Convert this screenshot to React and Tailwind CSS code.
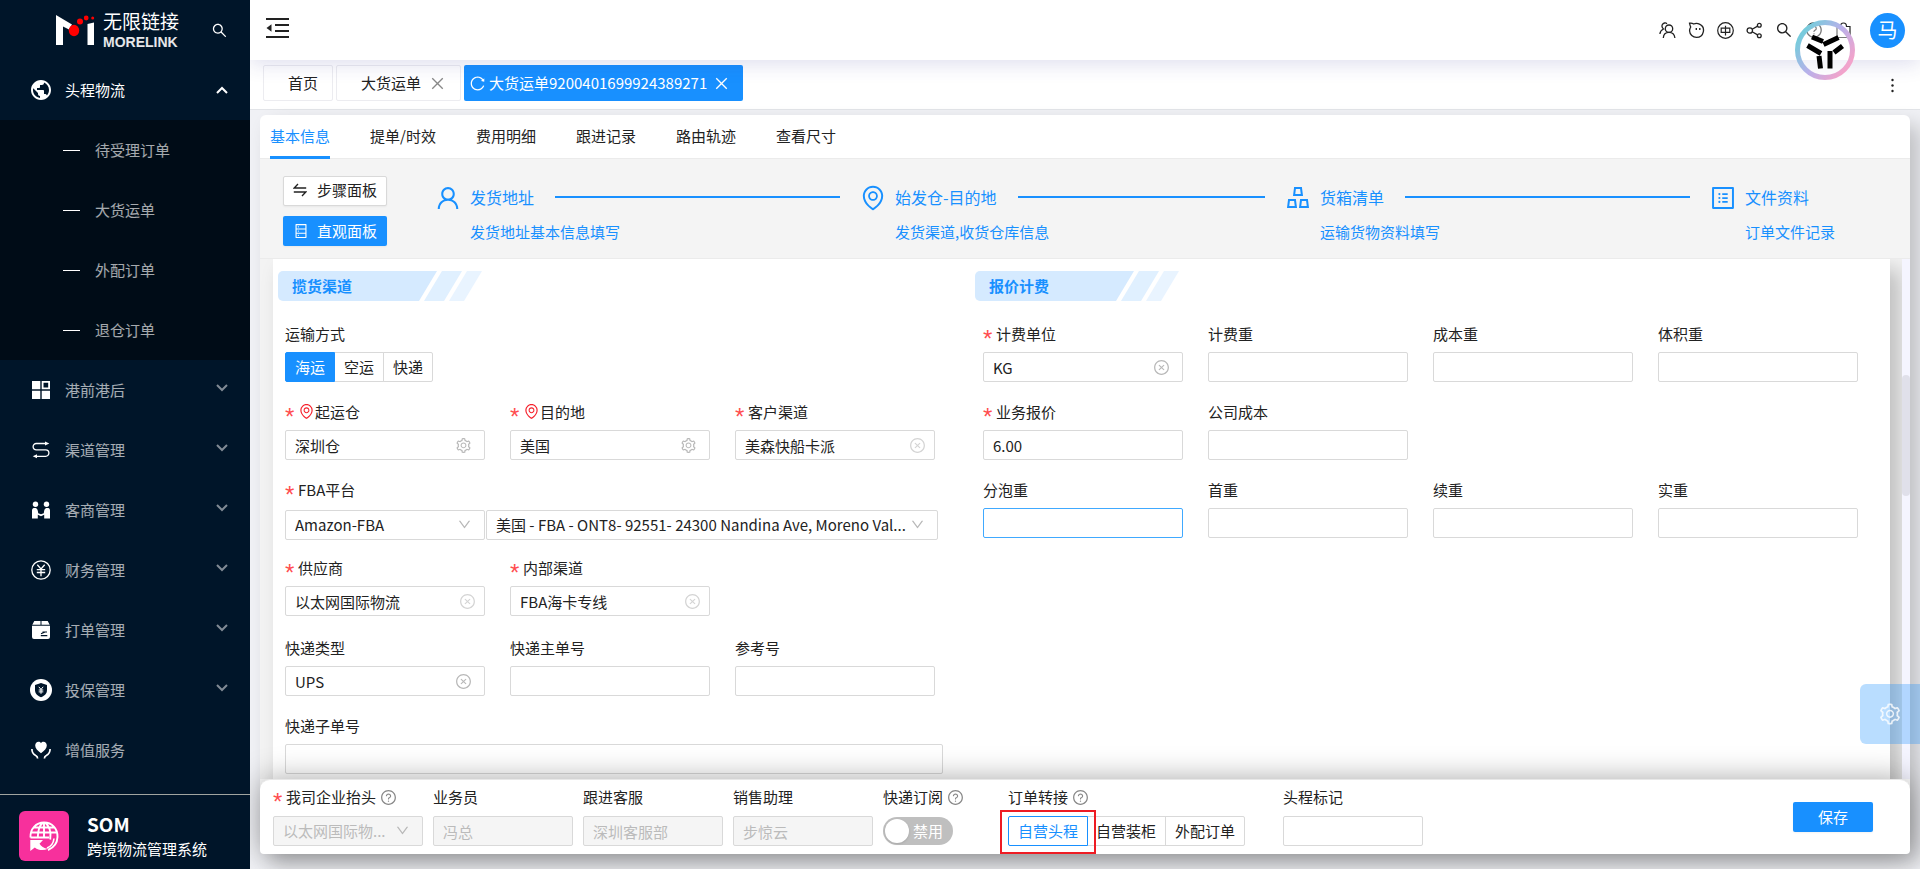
import {
  AiOutlineClose,
  AiOutlineCloseCircle,
  AiOutlineDatabase,
  AiOutlineDown,
  AiOutlineEnvironment,
  AiOutlineProfile,
  AiOutlineQuestionCircle,
  AiOutlineReload,
  AiOutlineSearch,
  AiOutlineSetting,
  AiOutlineUser,
} from "react-icons/ai";
import { MdPublic } from "react-icons/md";

/* ---------- icons ---------- */

function MoreLinkMark() {
  return (
    <svg width="40" height="32" viewBox="0 0 40 32" aria-hidden="true">
      <path d="M1 1L17 10.500 14 15.500 8 12.500V31H1z" fill="#fff" />
      <path d="M32.500 10L39 8.500V31H32.500z" fill="#fff" />
      <ellipse cx="19" cy="16.500" rx="5.200" ry="5.800" fill="#f00" />
      <circle cx="25" cy="7.500" r="3" fill="#f00" />
      <circle cx="31.200" cy="4" r="2.400" fill="#f00" />
      <circle cx="37.700" cy="4" r="1.500" fill="#f00" />
    </svg>
  );
}

function GridIcon() {
  return (
    <svg width="18" height="18" viewBox="0 0 18 18" fill="currentColor">
      <path d="M0 0h8.300v8.300H0zM0 9.700h8.300V18H0zM9.700 9.700H18V18H9.700z" />
      <path d="M10.600 .9h6.500v6.500h-6.500z" fill="none" stroke="currentColor" strokeWidth="1.800" />
    </svg>
  );
}

function RouteIcon() {
  return (
    <svg width="18" height="18" viewBox="0 0 18 18" fill="none" stroke="currentColor" strokeWidth="1.300">
      <path d="M14 2.500H4.300a3.200 3.200 0 0 0 0 6.400h9.400a3.200 3.200 0 0 1 0 6.400H4" />
      <path d="M13 .5l4.300 2-4.300 2zM5 13.300L.7 15.300 5 17.300z" fill="currentColor" stroke="none" />
    </svg>
  );
}

function PartnersIcon() {
  return (
    <svg width="18" height="18" viewBox="0 0 18 18" fill="currentColor">
      <circle cx="3.500" cy="3.200" r="2.700" />
      <circle cx="14.500" cy="3.200" r="2.700" />
      <path d="M0 17.500V9.500C0 7.800 1 7 2.600 7 4.500 7 5.600 8 5.900 10.200l.3 2 2.800 1 2.800-1 .3-2C12.400 8 13.500 7 15.400 7 17 7 18 7.800 18 9.500v8h-5.800v-3.700L9 15.200l-3.200-1.400v3.700z" />
    </svg>
  );
}

function YuanIcon() {
  return (
    <svg width="20" height="20" viewBox="0 0 20 20" fill="none" stroke="currentColor" strokeWidth="1.300">
      <circle cx="10" cy="10" r="9.200" />
      <path d="M6.300 4.800L10 9l3.700-4.200M10 9v7.300M5.800 9.600h8.400M5.800 12.500h8.400" />
    </svg>
  );
}

function BoxIcon() {
  return (
    <svg width="18" height="18" viewBox="0 0 18 18">
      <path d="M2.300 0h6.200v3.800H.3zM9.500 0h6.200l2 3.800H9.500zM0 4.800h18V16a2 2 0 0 1-2 2H2a2 2 0 0 1-2-2z" fill="currentColor" />
      <path d="M10.500 11h4.500M8.800 14.600h6.500M13 11l-4 1.700" stroke="#001529" strokeWidth="1.200" />
    </svg>
  );
}

function InsuranceIcon() {
  return (
    <svg width="22" height="22" viewBox="0 0 22 22">
      <circle cx="11" cy="11" r="11" fill="currentColor" />
      <path d="M11 4l6 2v5c0 3.600-2.500 5.800-6 7.300C7.500 16.800 5 14.600 5 11V6z" fill="#001529" />
      <path d="M8.800 7.800L11 10.400l2.200-2.600M11 10.400v4.400M8.700 11h4.600M8.700 12.900h4.600" stroke="#fff" strokeWidth="1" fill="none" />
    </svg>
  );
}

function CareIcon() {
  return (
    <svg width="20" height="18" viewBox="0 0 20 18">
      <path d="M10 12.300C6.500 9.500 4.200 7.500 4.200 4.500 4.200 2.200 5.800.8 7.500.8c1 0 2 .5 2.500 1.400.5-.9 1.500-1.400 2.500-1.400 1.700 0 3.300 1.400 3.300 3.700 0 3-2.300 5-5.800 7.800z" fill="currentColor" />
      <path d="M.9 8c0 3.800 1.200 5.200 3.800 6.500 1.500.7 1.900 1.500 1.900 3M19.100 8c0 3.800-1.200 5.200-3.800 6.500-1.500.7-1.900 1.500-1.900 3" fill="none" stroke="currentColor" strokeWidth="1.700" />
    </svg>
  );
}

function SomIcon() {
  return (
    <svg width="32" height="32" viewBox="0 0 32 32" fill="none" stroke="#fff" strokeWidth="1.900">
      <path d="M2.500 17.500C2 9 8 2.500 16 2.500S29.800 8.500 29.500 17c-.2 6-3.500 10.500-9.500 13M3 12.500h26M6 7.500h20M2.500 17.500H21M16 2.500v15M15 2.500C11 6 9.800 11 9.800 17.500M17 2.500c5 4 6.200 10 5.200 17" />
      <path d="M26 18.500c-.5 4.500-3 8-7 9.500" strokeWidth="1.600" />
      <path d="M2.300 20H15l-3.500 3.700c1.500 2.600 4.300 4.600 8.500 5-4.500 2.300-9.500 1.700-13.200-1.300L2.300 31z" fill="#fff" stroke="none" />
    </svg>
  );
}

function MenuFoldIcon() {
  return (
    <svg width="23" height="22" viewBox="0 0 23 22" fill="none" stroke="#222" strokeWidth="2">
      <path d="M0 2h23M9 8h14M9 14h14M0 20h23" />
      <path d="M5.500 7.300v7.400L.5 11z" fill="#222" stroke="none" />
    </svg>
  );
}

function PeopleIcon() {
  return (
    <svg width="17" height="17" viewBox="0 0 17 17" fill="none" stroke="currentColor" strokeWidth="1.300">
      <circle cx="10" cy="6.700" r="3.700" />
      <path d="M4.300 16c.2-3.500 2-5.600 5.700-5.600s5.500 2.100 5.900 5.600M7.900 1.800C7.300 1 6.500.8 5.500 1 3.500 1.400 2.600 3.300 3.200 5.200c.2.800.8 1.400 1.300 1.800C2.300 8 1.100 9.500.9 12" />
    </svg>
  );
}

function KittyIcon() {
  return (
    <svg width="17" height="17" viewBox="0 0 17 17" fill="none" stroke="currentColor" strokeWidth="1.300">
      <path d="M1.500 1.200c1.400-.3 3 0 4.200.8 1.700-.7 4-.7 5.800.2 3 1.400 4.500 4.500 3.800 7.700-.7 3.400-3.500 5.500-6.800 5.500-3.700 0-6.700-2.800-6.900-6.400C1.500 7.500 2 6.200 2.700 5c-.6-1.200-.9-2.600-1.200-3.800z" />
      <path d="M8.300 6v2M11.800 6v2" strokeWidth="1.400" />
    </svg>
  );
}

function LangIcon() {
  return (
    <svg width="17" height="17" viewBox="0 0 17 17" fill="none" stroke="currentColor" strokeWidth="1.200">
      <circle cx="8.500" cy="8.500" r="7.800" />
      <path d="M4.200 6.200h8.600v4.200H4.200zM8.500 3.800v9.600" />
    </svg>
  );
}

function ShareIcon() {
  return (
    <svg width="17" height="17" viewBox="0 0 17 17" fill="none" stroke="currentColor" strokeWidth="1.300">
      <circle cx="3.800" cy="8.500" r="2.700" />
      <circle cx="13.300" cy="3.200" r="1.900" />
      <circle cx="13.300" cy="13.800" r="1.900" />
      <path d="M6.200 7.200l5.400-3.100M6.200 9.800l5.400 3.100" />
    </svg>
  );
}

function BagIcon() {
  return (
    <svg width="17" height="17" viewBox="0 0 17 17" fill="none" stroke="currentColor" strokeWidth="1.200">
      <path d="M2 4.500h3.500C5.500 2 6.500 1 8.500 1s3 1 3 3.500H15v11H2z" />
    </svg>
  );
}

function FloatLogo() {
  return (
    <svg width="60" height="60" viewBox="0 0 60 60">
      <defs>
        <linearGradient id="ring" x1="0.100" y1="0.200" x2="0.900" y2="0.800">
          <stop offset="0" stopColor="#78cbdc" />
          <stop offset="0.500" stopColor="#b9b0ea" />
          <stop offset="1" stopColor="#f2a3cb" />
        </linearGradient>
      </defs>
      <circle cx="30" cy="30" r="27.500" fill="#fff" fillOpacity="0.4" stroke="url(#ring)" strokeWidth="5" />
      <path d="M17 17l11 4.500M28.500 24.500L43.500 17.500M12.500 25.500L26 33.500M39 32.500l8.500-6.500M24 36l1.500 12.500M35 31v17.500" stroke="#000" strokeWidth="5" />
    </svg>
  );
}

function SwapIcon() {
  return (
    <svg width="14" height="14" viewBox="0 0 14 14" fill="none" stroke="currentColor" strokeWidth="1.300">
      <path d="M5 1L1.200 5h12M.8 9h12L9 13" />
    </svg>
  );
}

function CratesIcon() {
  return (
    <svg width="22" height="22" viewBox="0 0 22 22" fill="none" stroke="currentColor" strokeWidth="2">
      <path d="M8 1h6l.9 7H7.100zM2 13h6l.9 7H1.100zM14 13h6l.9 7h-7.800z" />
    </svg>
  );
}

/* ---------- sidebar ---------- */

const subMenu = ["待受理订单", "大货运单", "外配订单", "退仓订单"];

const menu = [
  { name: "港前港后", icon: <GridIcon />, arrow: true },
  { name: "渠道管理", icon: <RouteIcon />, arrow: true },
  { name: "客商管理", icon: <PartnersIcon />, arrow: true },
  { name: "财务管理", icon: <YuanIcon />, arrow: true },
  { name: "打单管理", icon: <BoxIcon />, arrow: true },
  { name: "投保管理", icon: <InsuranceIcon />, arrow: true },
  { name: "增值服务", icon: <CareIcon />, arrow: false },
];

function Chevron({ up }) {
  return (
    <svg
      width="12"
      height="8"
      viewBox="0 0 12 8"
      fill="none"
      stroke="currentColor"
      strokeWidth="2"
      className={up ? "text-white" : "mb-1 text-white/50"}
    >
      <path d={up ? "M1 7l5-5 5 5" : "M1 1l5 5 5-5"} />
    </svg>
  );
}

function Sidebar() {
  return (
    <aside className="relative z-20 flex w-[250px] shrink-0 flex-col bg-[#001529] text-white/65">
      <div className="flex h-[60px] shrink-0 items-center pl-[55px] pr-[22px] text-white">
        <MoreLinkMark />
        <div className="ml-2 flex flex-col">
          <span className="h-5 text-[19px] leading-[20px]">无限链接</span>
          <span className="mt-1 font-['Liberation_Sans',sans-serif] text-[14px] font-bold leading-none text-white/90">
            MORELINK
          </span>
        </div>
        <button className="ml-auto" aria-label="搜索">
          <AiOutlineSearch size={17} />
        </button>
      </div>

      <nav className="min-h-0 flex-1 overflow-hidden">
        <a href="#" className="flex h-[60px] items-center pl-[30px] pr-[22px] text-white">
          <span className="flex w-[22px] justify-center">
            <MdPublic size={24} className="shrink-0" />
          </span>
          <span className="ml-[13px] flex-1">头程物流</span>
          <Chevron up />
        </a>
        <div className="bg-[#000c17]">
          {subMenu.map((name) => (
            <a key={name} href="#" className="flex h-[60px] items-center pl-[63px]">
              <span className="h-px w-[17px] bg-white" />
              <span className="ml-[15px]">{name}</span>
            </a>
          ))}
        </div>
        {menu.map((item) => (
          <a key={item.name} href="#" className="flex h-[60px] items-center pl-[30px] pr-[22px]">
            <span className="flex w-[22px] justify-center text-white">{item.icon}</span>
            <span className="ml-[13px] flex-1">{item.name}</span>
            {item.arrow && <Chevron />}
          </a>
        ))}
      </nav>

      <div className="flex h-[75px] shrink-0 items-center border-t border-[#a0a4a0] pl-[19px] pt-2 text-white">
        <div className="flex h-[50px] w-[50px] items-center justify-center rounded-md bg-[#f7309c]">
          <SomIcon />
        </div>
        <div className="ml-[18px]">
          <div className="text-[19px] font-bold leading-[26px]">SOM</div>
          <div className="leading-[24px]">跨境物流管理系统</div>
        </div>
      </div>
    </aside>
  );
}

/* ---------- top ---------- */

function Header() {
  return (
    <header className="relative z-10 flex h-[60px] shrink-0 items-center bg-white pl-4 pr-[15px] shadow-[0_4px_20px_rgba(50,50,150,0.16)]">
      <button aria-label="收起菜单" className="-mt-1">
        <MenuFoldIcon />
      </button>
      <div className="ml-auto flex items-center gap-3 text-[#222]">
        <PeopleIcon />
        <KittyIcon />
        <LangIcon />
        <ShareIcon />
        <AiOutlineSearch size={18} />
        <AiOutlineQuestionCircle size={18} />
        <BagIcon />
      </div>
      <span className="ml-[18px] flex h-[35px] w-[35px] items-center justify-center rounded-full bg-[#1890ff] text-[20px] text-white">
        马
      </span>
      <div className="absolute right-[65px] top-5">
        <FloatLogo />
      </div>
    </header>
  );
}

function PageTabs() {
  return (
    <div className="flex h-[50px] shrink-0 items-center gap-[3px] border-b border-[#e2e4e8] bg-white pb-1 pl-[13px] pr-[26px] pt-px">
      <a href="#" className="flex h-9 items-center rounded-xs border border-[#ececf0] pl-6 pr-[14px]">
        首页
      </a>
      <a href="#" className="flex h-9 items-center rounded-xs border border-[#ececf0] pl-6 pr-[14px]">
        大货运单
        <AiOutlineClose size={17} className="ml-2 text-[#888]" />
      </a>
      <a href="#" className="flex h-9 items-center rounded-xs bg-[#1890ff] pl-[5px] pr-[13px] text-white">
        <AiOutlineReload size={17} className="mr-[3px]" />
        大货运单9200401699924389271
        <AiOutlineClose size={17} className="ml-1.5" />
      </a>
      <button aria-label="更多" className="ml-auto mt-1">
        <svg width="3" height="15" viewBox="0 0 3 15" fill="#222">
          <circle cx="1.500" cy="2" r="1.200" />
          <circle cx="1.500" cy="7.500" r="1.200" />
          <circle cx="1.500" cy="13" r="1.200" />
        </svg>
      </button>
    </div>
  );
}

const detailTabs = ["基本信息", "提单/时效", "费用明细", "跟进记录", "路由轨迹", "查看尺寸"];

function DetailTabs() {
  return (
    <div className="flex h-11 shrink-0 gap-10 border-b border-[#ebebeb] px-[10px]">
      {detailTabs.map((name, i) => (
        <button
          key={name}
          className={
            i === 0
              ? "-mb-px border-b-[3px] border-[#1890ff] pt-px text-[#1890ff]"
              : "-mb-px border-b-[3px] border-transparent pt-px"
          }
        >
          {name}
        </button>
      ))}
    </div>
  );
}

const steps = [
  { title: "发货地址", desc: "发货地址基本信息填写", icon: <AiOutlineUser size={28} /> },
  { title: "始发仓-目的地", desc: "发货渠道,收货仓库信息", icon: <AiOutlineEnvironment size={28} /> },
  { title: "货箱清单", desc: "运输货物资料填写", icon: <CratesIcon /> },
  { title: "文件资料", desc: "订单文件记录", icon: <AiOutlineProfile size={28} /> },
];

function StepsBar() {
  return (
    <div className="flex h-[100px] shrink-0 border-b border-[#ebebeb] bg-[#f4f4f4] pl-[23px] pr-[75px]">
      <div className="flex flex-col gap-[10px] pt-[17px]">
        <button className="flex h-[30px] items-center gap-[10px] rounded-xs border border-[#d9d9d9] bg-white px-[9px] pb-0.5 shadow-xs">
          <SwapIcon />
          步骤面板
        </button>
        <button className="flex h-[30px] items-center gap-2 rounded-xs bg-[#1890ff] px-[10px] text-white shadow-xs">
          <AiOutlineDatabase size={16} />
          直观面板
        </button>
      </div>
      <div className="ml-[51px] flex flex-1 pt-[25px] text-[#1890ff]">
        {steps.map((step, i) => (
          <div key={step.title} className={i < 3 ? "flex min-w-0 flex-1" : "flex"}>
            <div className="flex h-[28px] w-8 shrink-0 items-center">
              <span className="-ml-1 flex w-[28px] justify-center">{step.icon}</span>
            </div>
            <div className="flex-1">
              <div className="flex h-[26px] items-center text-[16px]">
                <span>{step.title}</span>
                {i < 3 && <span className="ml-[21px] mr-[23px] h-0.5 flex-1 bg-[#1890ff]" />}
              </div>
              <div className="mt-[10px] leading-[24px]">{step.desc}</div>
            </div>
          </div>
        ))}
      </div>
    </div>
  );
}

/* ---------- form ---------- */

function SectionTitle({ children }) {
  return (
    <div className="relative mb-[21px] flex h-[30px] w-[204px] items-center">
      <svg width="204" height="30" viewBox="0 0 204 30" className="absolute inset-0" aria-hidden="true">
        <path d="M5 0H159L141 30H5a5 5 0 0 1-5-5V5a5 5 0 0 1 5-5z" fill="#d5eaff" />
        <path d="M164 0h20l-18 30h-20z" fill="#e0f0ff" />
        <path d="M189 0h15l-18 30h-15z" fill="#e9f4ff" />
      </svg>
      <h2 className="relative pl-[14px] font-bold text-[#1890ff]">{children}</h2>
    </div>
  );
}

function Label({ id, required, pin, help, children }) {
  return (
    <label htmlFor={id} className="flex h-6 items-center whitespace-nowrap">
      {required && (
        <span className="w-[13px] pt-2.5 font-['Liberation_Sans',sans-serif] text-[24px] leading-none text-[#ff4d4f]">
          *
        </span>
      )}
      {pin && <AiOutlineEnvironment size={17} className="mb-0.5 text-[#f5222d]" />}
      {children}
      {help && <AiOutlineQuestionCircle size={17} className="ml-1 text-[#888]" />}
    </label>
  );
}

const suffixes = {
  gear: <AiOutlineSetting size={17} />,
  clear: <AiOutlineCloseCircle size={17} />,
};

function Field({ id, label, required, pin, value = "", suffix, soft, focus, wide }) {
  return (
    <div className={wide ? "w-[658px]" : "w-[200px]"}>
      <Label id={id} required={required} pin={pin}>
        {label}
      </Label>
      <div className="relative mt-1.5">
        <input
          id={id}
          defaultValue={value}
          className={
            focus
              ? "block h-[30px] w-full rounded-xs border border-[#40a9ff] bg-white px-[9px] outline-none"
              : "block h-[30px] w-full rounded-xs border border-[#d9d9d9] bg-white px-[9px] outline-none"
          }
        />
        {suffix && (
          <span
            className={
              soft
                ? "absolute inset-y-0 right-[9px] flex items-center text-[#d4d4d4]"
                : "absolute inset-y-0 right-[13px] flex items-center text-[#b8b8b8]"
            }
          >
            {suffixes[suffix]}
          </span>
        )}
      </div>
    </div>
  );
}

function Select({ id, name, text, disabled, className }) {
  return (
    <div className={`relative ${className}`}>
      <select
        id={id}
        aria-label={name}
        disabled={disabled}
        className="block h-[30px] w-full appearance-none rounded-xs border border-[#d9d9d9] bg-white px-[9px] outline-none disabled:bg-[#f5f5f5] disabled:text-[#bbb] disabled:opacity-100"
      >
        <option>{text}</option>
      </select>
      <AiOutlineDown size={15} className="pointer-events-none absolute right-[13px] top-[7px] text-[#b8b8b8]" />
    </div>
  );
}

function TransportPicker() {
  const item = "flex h-[30px] cursor-pointer items-center border px-[9px]";
  return (
    <fieldset>
      <legend className="mb-1.5 h-6 leading-[24px]">运输方式</legend>
      <div className="flex">
        <label className={`${item} rounded-l-xs border-[#1890ff] bg-[#1890ff] text-white`}>
          <input type="radio" name="transport" defaultChecked className="sr-only" />
          海运
        </label>
        <label className={`${item} border-l-0 border-[#d9d9d9] bg-white`}>
          <input type="radio" name="transport" className="sr-only" />
          空运
        </label>
        <label className={`${item} -ml-px rounded-r-xs border-[#d9d9d9] bg-white`}>
          <input type="radio" name="transport" className="sr-only" />
          快递
        </label>
      </div>
    </fieldset>
  );
}

function Row({ children }) {
  return <div className="mb-[18px] flex gap-[25px]">{children}</div>;
}

function FormArea() {
  return (
    <div className="flex min-h-0 flex-1 overflow-hidden bg-[#f3f3f3]">
      <div className="relative flex flex-1 overflow-hidden pl-[13px] pr-3">
        <div className="flex flex-1 bg-white pl-[5px] pt-3 shadow-[10px_10px_20px_rgba(0,0,0,0.22)]">
          <section className="shrink-0 pr-8">
            <SectionTitle>揽货渠道</SectionTitle>
            <div className="pl-[7px]">
              <Row>
                <TransportPicker />
              </Row>
              <Row>
                <Field id="from" label="起运仓" required pin value="深圳仓" suffix="gear" />
                <Field id="to" label="目的地" required pin value="美国" suffix="gear" />
                <Field id="channel" label="客户渠道" required value="美森快船卡派" suffix="clear" soft />
              </Row>
              <div className="mb-4">
                <Label id="platform" required>
                  FBA平台
                </Label>
                <div className="mt-2 flex gap-px">
                  <Select id="platform" name="FBA平台" text="Amazon-FBA" className="w-[200px]" />
                  <Select
                    id="warehouse"
                    name="FBA仓库"
                    text="美国 - FBA - ONT8- 92551- 24300 Nandina Ave, Moreno Val..."
                    className="w-[452px]"
                  />
                </div>
              </div>
              <Row>
                <Field id="supplier" label="供应商" required value="以太网国际物流" suffix="clear" soft />
                <Field id="inner" label="内部渠道" required value="FBA海卡专线" suffix="clear" soft />
              </Row>
              <div className="pt-0.5">
                <Row>
                  <Field id="express" label="快递类型" value="UPS" suffix="clear" />
                  <Field id="master" label="快递主单号" />
                  <Field id="ref" label="参考号" />
                </Row>
                <Row>
                  <Field id="sub" label="快递子单号" wide />
                </Row>
              </div>
            </div>
          </section>

          <section>
            <SectionTitle>报价计费</SectionTitle>
            <div className="pl-2">
              <Row>
                <Field id="unit" label="计费单位" required value="KG" suffix="clear" />
                <Field id="chargeWeight" label="计费重" />
                <Field id="costWeight" label="成本重" />
                <Field id="volWeight" label="体积重" />
              </Row>
              <Row>
                <Field id="quote" label="业务报价" required value="6.00" />
                <Field id="cost" label="公司成本" />
              </Row>
              <Row>
                <Field id="split" label="分泡重" focus />
                <Field id="first" label="首重" />
                <Field id="next" label="续重" />
                <Field id="real" label="实重" />
              </Row>
            </div>
          </section>
        </div>
      </div>
      <div className="w-2 bg-[#f5f5ff] pt-[116px]">
        <div className="h-[121px] rounded-full bg-[#e0e0ea]" />
      </div>
    </div>
  );
}

function DisabledField({ id, label, value }) {
  return (
    <div className="w-[140px]">
      <Label id={id}>{label}</Label>
      <input
        id={id}
        disabled
        defaultValue={value}
        className="mt-[7px] block h-[30px] w-full rounded-xs border border-[#d9d9d9] bg-[#f5f5f5] px-[9px] text-[#bbb]"
      />
    </div>
  );
}

function FooterBar() {
  const item = "flex h-[30px] cursor-pointer items-center whitespace-nowrap border px-[9px]";
  return (
    <div className="relative flex h-[75px] shrink-0 gap-[10px] rounded-b-sm rounded-t-[10px] border-t border-[#e8e8e8] bg-white pl-[13px] pr-[37px] pt-[5px] shadow-[0_0_30px_rgba(0,0,0,0.35)]">
      <div className="w-[150px]">
        <Label id="company" required help>
          我司企业抬头
        </Label>
        <Select id="company" name="我司企业抬头" text="以太网国际物..." disabled className="mt-[7px]" />
      </div>
      <DisabledField id="sales" label="业务员" value="冯总" />
      <DisabledField id="service" label="跟进客服" value="深圳客服部" />
      <DisabledField id="assistant" label="销售助理" value="步惊云" />
      <div className="w-[115px]">
        <Label id="subscribe" help>
          快递订阅
        </Label>
        <label className="mt-2 flex h-7 w-[70px] cursor-pointer items-center rounded-full bg-[#bfbfbf] pl-0.5 text-white">
          <input id="subscribe" type="checkbox" role="switch" className="sr-only" />
          <span className="h-6 w-6 rounded-full bg-white shadow" />
          <span className="ml-1">禁用</span>
        </label>
      </div>
      <fieldset className="w-[265px]">
        <legend className="flex h-6 items-center">
          订单转接
          <AiOutlineQuestionCircle size={17} className="ml-1 text-[#888]" />
        </legend>
        <div className="relative mt-[7px] flex">
          <label className={`${item} z-10 rounded-l-xs border-[#1890ff] bg-white text-[#1890ff]`}>
            <input type="radio" name="transfer" defaultChecked className="sr-only" />
            自营头程
          </label>
          <label className={`${item} -ml-0.5 border-[#d9d9d9]`}>
            <input type="radio" name="transfer" className="sr-only" />
            自营装柜
          </label>
          <label className={`${item} -ml-px rounded-r-xs border-[#d9d9d9]`}>
            <input type="radio" name="transfer" className="sr-only" />
            外配订单
          </label>
          <div className="pointer-events-none absolute -left-2 -top-1.5 z-20 h-11 w-24 border-2 border-[#ee1c24]" />
        </div>
      </fieldset>
      <div className="w-[140px]">
        <Label id="mark">头程标记</Label>
        <input
          id="mark"
          className="mt-[7px] block h-[30px] w-full rounded-xs border border-[#d9d9d9] bg-white px-[9px] outline-none"
        />
      </div>
      <button className="ml-auto mt-[17px] h-[30px] w-20 rounded-xs bg-[#1890ff] text-white shadow-xs">保存</button>
    </div>
  );
}

export default function App() {
  return (
    <div className="relative flex h-screen overflow-hidden bg-[#f0f1f5] font-['Noto_Sans_CJK_SC','Noto_Sans',sans-serif] text-[15px] text-[#222]">
      <Sidebar />
      <main className="flex min-w-0 flex-1 flex-col">
        <Header />
        <PageTabs />
        <div className="mx-[10px] mb-[15px] mt-[5px] flex min-h-0 flex-1 flex-col rounded-md bg-white shadow-[10px_10px_20px_rgba(0,0,0,0.2)]">
          <DetailTabs />
          <StepsBar />
          <FormArea />
          <FooterBar />
        </div>
      </main>
      <button
        aria-label="设置"
        className="absolute bottom-[125px] right-0 z-30 flex h-[60px] w-[60px] items-center justify-center rounded-l-md bg-[#1890ff]/30 text-white/80"
      >
        <AiOutlineSetting size={24} />
      </button>
    </div>
  );
}
